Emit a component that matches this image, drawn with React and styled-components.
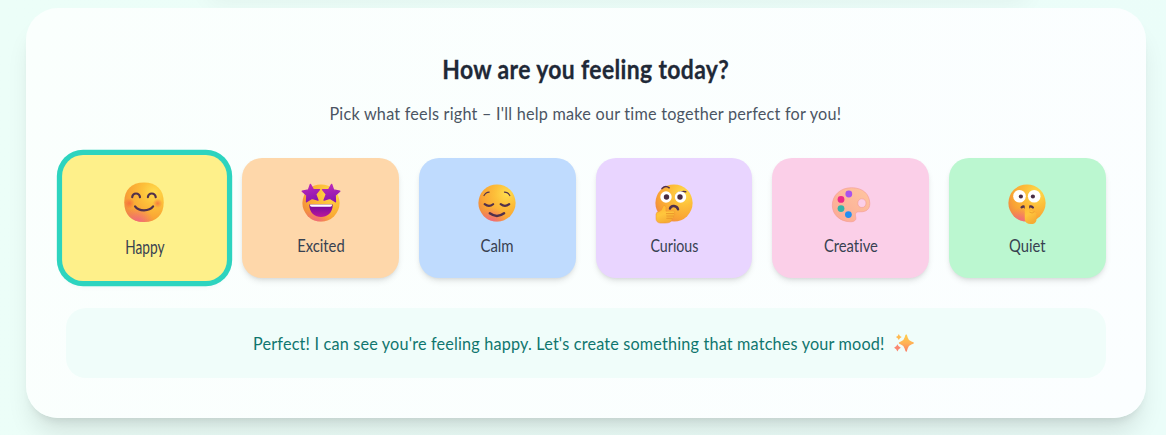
import React from 'react';
import styled, { createGlobalStyle } from 'styled-components';

const GlobalStyle = createGlobalStyle`
  * { box-sizing: border-box; }
  body {
    margin: 0;
    height: 435px;
    overflow: hidden;
    background: linear-gradient(100deg, #ecfef8, #ebfdf9);
    font-family: Lato, "Open Sans", "Noto Sans", sans-serif;
    font-variant-ligatures: none;
  }
`;

const Page = styled.main`
  position: relative;
  height: 435px;
  padding: 8px 20.3px 17px 25.7px;
  overflow: hidden;
`;

const HeaderShade = styled.div`
  position: absolute;
  top: -30px;
  left: 206px;
  right: 136px;
  height: 30px;
  border-radius: 20px;
  box-shadow: 0 4px 22px rgba(0, 0, 0, 0.045);
`;

const Card = styled.section`
  position: relative;
  height: 410px;
  padding: 40px;
  border-radius: 32px;
  background: linear-gradient(110deg, #fafffd, #fbfeff);
  box-shadow: 0 20px 25px -5px rgba(0, 0, 0, 0.1), 0 8px 10px -6px rgba(0, 0, 0, 0.1);
  display: flex;
  flex-direction: column;
  align-items: stretch;
`;

const Heading = styled.h2`
  margin: 0;
  height: 42px;
  line-height: 42px;
  text-align: center;
  font-size: 27px;
  font-weight: 700;
  color: #1f2937;
  -webkit-text-stroke: 0.3px #1f2937;
`;

const Subtitle = styled.p`
  margin: 9px 0 0;
  height: 28px;
  line-height: 28px;
  text-align: center;
  font-size: 18px;
  color: #4b5563;
`;

const Fit = styled.span`
  display: inline-block;
  flex: none;
  white-space: nowrap;
  transform: scaleX(${(p) => p.$x});
  letter-spacing: ${(p) => p.$spacing || 0}px;
`;

const Moods = styled.div`
  display: grid;
  grid-template-columns: repeat(6, 1fr);
  gap: 20px;
  margin-top: 31px;
`;

const Mood = styled.button`
  height: 120px;
  padding: 24.5px 0 0;
  border: 0;
  border-radius: 20px;
  background: ${(p) => p.$color};
  color: #374151;
  font: 400 18px/27px Lato, "Open Sans", sans-serif;
  font-variant-ligatures: none;
  display: flex;
  flex-direction: column;
  align-items: center;
  gap: 9px;
  transform: ${(p) => (p.$active ? 'scale(1.05)' : 'none')};
  box-shadow: ${(p) => (p.$active
    ? '0 0 0 5px #2dd4bf, 0 4px 6px rgba(0,0,0,0.05)'
    : '0 4px 6px -1px rgba(0,0,0,0.1), 0 2px 4px -2px rgba(0,0,0,0.1)')};
`;

const Message = styled.div`
  height: 70px;
  margin-top: 30px;
  border-radius: 20px;
  background: #f0fdfa;
  color: #0f766e;
  font-size: 18px;
  display: flex;
  align-items: center;
  justify-content: center;
`;

const MessageText = styled.div`
  flex: none;
  width: 632px;
  display: flex;
  justify-content: center;
`;

const Emoji = styled.svg`
  display: block;
  flex: none;
  width: 40px;
  height: 40px;
  overflow: visible;
`;

const Sparkles = styled.svg`
  flex: none;
  width: 20px;
  height: 20px;
  margin-left: 9px;
  margin-right: 5px;
`;

function Defs() {
  return (
    <svg width="0" height="0" style={{ position: 'absolute' }} aria-hidden="true">
      <defs>
        <radialGradient id="face" cx="0.76" cy="0.25" r="0.9">
          <stop offset="0" stopColor="#ffdd4e" />
          <stop offset="0.35" stopColor="#fdc03a" />
          <stop offset="0.75" stopColor="#f9a334" />
          <stop offset="1" stopColor="#ee8446" />
        </radialGradient>
        <radialGradient id="pinkLow" cx="0.35" cy="1.02" r="0.4">
          <stop offset="0" stopColor="#f1608c" stopOpacity="0.85" />
          <stop offset="1" stopColor="#f1608c" stopOpacity="0" />
        </radialGradient>
        <radialGradient id="cheek">
          <stop offset="0" stopColor="#f4583f" stopOpacity="0.65" />
          <stop offset="1" stopColor="#f4583f" stopOpacity="0" />
        </radialGradient>
        <linearGradient id="star" x1="0" y1="0" x2="0.3" y2="1">
          <stop offset="0" stopColor="#c02abb" />
          <stop offset="1" stopColor="#8c16b0" />
        </linearGradient>
        <linearGradient id="mouth" x1="0" y1="0" x2="0" y2="1">
          <stop offset="0" stopColor="#6d0aa0" />
          <stop offset="1" stopColor="#bd1799" />
        </linearGradient>
        <linearGradient id="hand" x1="0" y1="0" x2="0.4" y2="1">
          <stop offset="0" stopColor="#ffb52e" />
          <stop offset="0.55" stopColor="#ffc63d" />
          <stop offset="1" stopColor="#f6ac33" />
        </linearGradient>
        <linearGradient id="wood" x1="1" y1="0" x2="0" y2="1">
          <stop offset="0" stopColor="#ffc6a0" />
          <stop offset="1" stopColor="#fba995" />
        </linearGradient>
        <linearGradient id="spark" x1="0" y1="0" x2="0" y2="1">
          <stop offset="0" stopColor="#ffcf4b" />
          <stop offset="0.5" stopColor="#ffb255" />
          <stop offset="1" stopColor="#fa7d69" />
        </linearGradient>
      </defs>
    </svg>
  );
}

const Face = ({ plain }) => (
  <>
    <circle cx="20" cy="20" r="18.6" fill="url(#face)" />
    {!plain && <circle cx="20" cy="20" r="18.6" fill="url(#pinkLow)" />}
  </>
);

const ink = { fill: 'none', stroke: '#51304b', strokeWidth: 1.9, strokeLinecap: 'round', strokeLinejoin: 'round' };

const drawings = {
  Happy: (
    <>
      <path d="M20 1.2C32 1.2 38.8 8 38.8 20S32 38.8 20 38.8 1.2 32 1.2 20 8 1.2 20 1.2Z" fill="url(#face)" />
      <path d="M20 1.2C32 1.2 38.8 8 38.8 20S32 38.8 20 38.8 1.2 32 1.2 20 8 1.2 20 1.2Z" fill="url(#pinkLow)" />
      <circle cx="6" cy="21" r="5" fill="url(#cheek)" />
      <circle cx="33" cy="21" r="4.5" fill="url(#cheek)" />
      <path d="M8.8 15.2C9.4 10.5 15.4 10.5 16.2 15.2M23.7 15.2C24.4 10.5 30.4 10.5 31.2 15.2" {...ink} strokeWidth="2.1" />
      <path d="M11.5 24C15 29 25 29 28.7 24" {...ink} strokeWidth="2.1" />
    </>
  ),
  Excited: (
    <>
      <Face />
      <path d="M9.4 1.3L12.2 6.4 18.5 6.6 14.7 11.3 17 17.2 11.2 15.3 5.5 18.8 5.8 12.3 1.2 8.2 7.4 6.9Z" fill="url(#star)" stroke="url(#star)" strokeWidth="1.3" strokeLinejoin="round" />
      <path d="M30.6 1.3L27.8 6.4 21.5 6.6 25.3 11.3 23 17.2 28.8 15.3 34.5 18.8 34.2 12.3 38.8 8.2 32.6 6.9Z" fill="url(#star)" stroke="url(#star)" strokeWidth="1.3" strokeLinejoin="round" />
      <path d="M8.3 21.5H31.7C32 38.2 8 38.2 8.3 21.5Z" fill="url(#mouth)" />
      <path d="M9.1 21.5H30.9V22.2Q30.7 23.8 29 23.8H11Q9.3 23.8 9.1 22.2Z" fill="#fff" />
    </>
  ),
  Calm: (
    <>
      <Face />
      <path d="M7 12.6Q8.8 9.2 12.2 9.1M27.4 9.1Q31.2 9.2 32.8 12.6" {...ink} strokeWidth="1.1" />
      <path d="M7.7 21.2Q12 24.5 16.1 21.2M23.7 21.2Q28 24.5 32.2 21.2" {...ink} strokeWidth="2.1" />
      <path d="M12.8 30.3Q19.9 35.5 27.1 30.3" {...ink} strokeWidth="2.4" />
    </>
  ),
  Curious: (
    <>
      <Face plain />
      <path d="M8 5.6Q11.5 1.8 15.2 4.8M22.5 11Q27.1 7.7 31.7 8.8" {...ink} strokeWidth="1.5" />
      <circle cx="12" cy="14" r="5.7" fill="#fff" />
      <circle cx="26.5" cy="14" r="5.7" fill="#fff" />
      <circle cx="12.5" cy="14" r="2.7" fill="#492d43" />
      <circle cx="26" cy="14" r="2.7" fill="#492d43" />
      <path d="M16 25.5C17 21.8 23 22.1 24 26.3" {...ink} strokeWidth="2.5" />
      <path d="M9 23.5Q9.4 21.8 11 22.5 12.4 23.1 11.9 28.2L19.2 28Q21.4 28.3 20.6 30.1 21 31.8 19.8 32.7 19.8 34.6 18.4 35.2 18.2 40.2 11 40.1H6.2Q2 39.5 2 35.6V31.2Q2.1 29 5 28.6Q8 27.8 8.3 25Z" fill="url(#hand)" stroke="#ee9030" strokeWidth=".5" />
      <path d="M12 30.6H20M12.4 33H19.5M12.4 35.3H18" fill="none" stroke="#e58c25" strokeWidth=".75" />
    </>
  ),
  Creative: (
    <>
      <path d="M20.5 4.7C9.4 4.8 1.3 12 1.3 22.4 1.3 31.7 9.2 38.8 19.7 38.8 23.3 38.8 25.4 37 24.8 34.5 23.7 29.8 25.2 28.7 29.2 28.8 35 29 38.9 26.5 38.8 20.3 38.6 11 31.7 4.7 20.5 4.7ZM30.8 15.8C33.8 15.8 35 18 35 20.2 35 22.8 33.3 24.5 30.8 24.5S26.8 22.8 26.8 20.3C26.8 17.7 28.3 15.8 30.8 15.8Z" fillRule="evenodd" fill="url(#wood)" stroke="#f49b91" strokeWidth=".6" />
      <circle cx="17.8" cy="11" r="3.4" fill="#a953ed" />
      <circle cx="10" cy="16.4" r="3.4" fill="#ed2a87" />
      <circle cx="10" cy="25.6" r="3.4" fill="#32b4a7" />
      <circle cx="17.4" cy="31.6" r="3.4" fill="#238ff0" />
    </>
  ),
  Quiet: (
    <>
      <Face />
      <circle cx="12.5" cy="13.3" r="6.3" fill="#fff" />
      <circle cx="27.2" cy="13.3" r="6.3" fill="#fff" />
      <circle cx="13.9" cy="13.5" r="2.1" fill="#492d43" />
      <circle cx="25.9" cy="13.5" r="2.1" fill="#492d43" />
      <path d="M14.6 24.3Q17.2 22.2 19 25.5M21 25.3Q23.2 22 25.9 24.5" {...ink} strokeWidth="2.3" />
      <path d="M17.7 23.2Q17.7 20.6 20 20.6T22.2 23.1V27.6Q23 27.2 25.6 28.4L29.4 30.2V37.4Q28.7 41 23.8 41 18.6 41 17.8 36.5Z" fill="url(#hand)" />
      <path d="M22.4 29Q25.3 31.2 27.5 28.7" fill="none" stroke="#e99829" strokeWidth=".8" />
    </>
  ),
};

const moods = [
  { name: 'Happy', color: '#fef08a', x: 0.725 },
  { name: 'Excited', color: '#fed7aa', x: 0.82 },
  { name: 'Calm', color: '#bfdbfe', x: 0.83 },
  { name: 'Curious', color: '#e9d5ff', x: 0.79 },
  { name: 'Creative', color: '#fbcfe8', x: 0.82 },
  { name: 'Quiet', color: '#bbf7d0', x: 0.82 },
];

export default function App() {
  return (
    <Page>
      <GlobalStyle />
      <Defs />
      <HeaderShade />
      <Card>
        <Heading><Fit $x={0.85} $spacing={0.42}>How are you feeling today?</Fit></Heading>
        <Subtitle><Fit $x={0.9} $spacing={0.25}>Pick what feels right – I'll help make our time together perfect for you!</Fit></Subtitle>
        <Moods>
          {moods.map((m) => (
            <Mood key={m.name} $color={m.color} $active={m.name === 'Happy'}>
              <Emoji viewBox="0 0 40 40">{drawings[m.name]}</Emoji>
              <Fit $x={m.x}>{m.name}</Fit>
            </Mood>
          ))}
        </Moods>
        <Message>
          <MessageText><Fit $x={0.9} $spacing={0.2}>Perfect! I can see you're feeling happy. Let's create something that matches your mood!</Fit></MessageText>
          <Sparkles viewBox="0 0 20 20">
            <path d="M12.2 1.3Q13 1.3 13.7 4.6 14.4 7.7 17.5 8.6 20 9.3 20 10.1T17.3 11.5Q14.4 12.4 13.6 15.8 12.9 19 12.2 19T10.7 15.8Q9.8 12.4 6.9 11.5 4.7 10.8 4.7 10.1T6.9 8.6Q9.8 7.7 10.6 4.5 11.4 1.3 12.2 1.3Z" fill="url(#spark)" />
            <path d="M4.8.9Q5.5 3.2 7.7 4 5.5 4.8 4.8 7.1 4 4.8 1.9 4 4 3.2 4.8.9Z" fill="#ffba51" />
            <path d="M3.4 11.2Q4.2 13.8 6.8 14.8 4.2 15.8 3.4 18.5 2.6 15.8.1 14.8 2.6 13.8 3.4 11.2Z" fill="#fa8871" />
          </Sparkles>
        </Message>
      </Card>
    </Page>
  );
}
